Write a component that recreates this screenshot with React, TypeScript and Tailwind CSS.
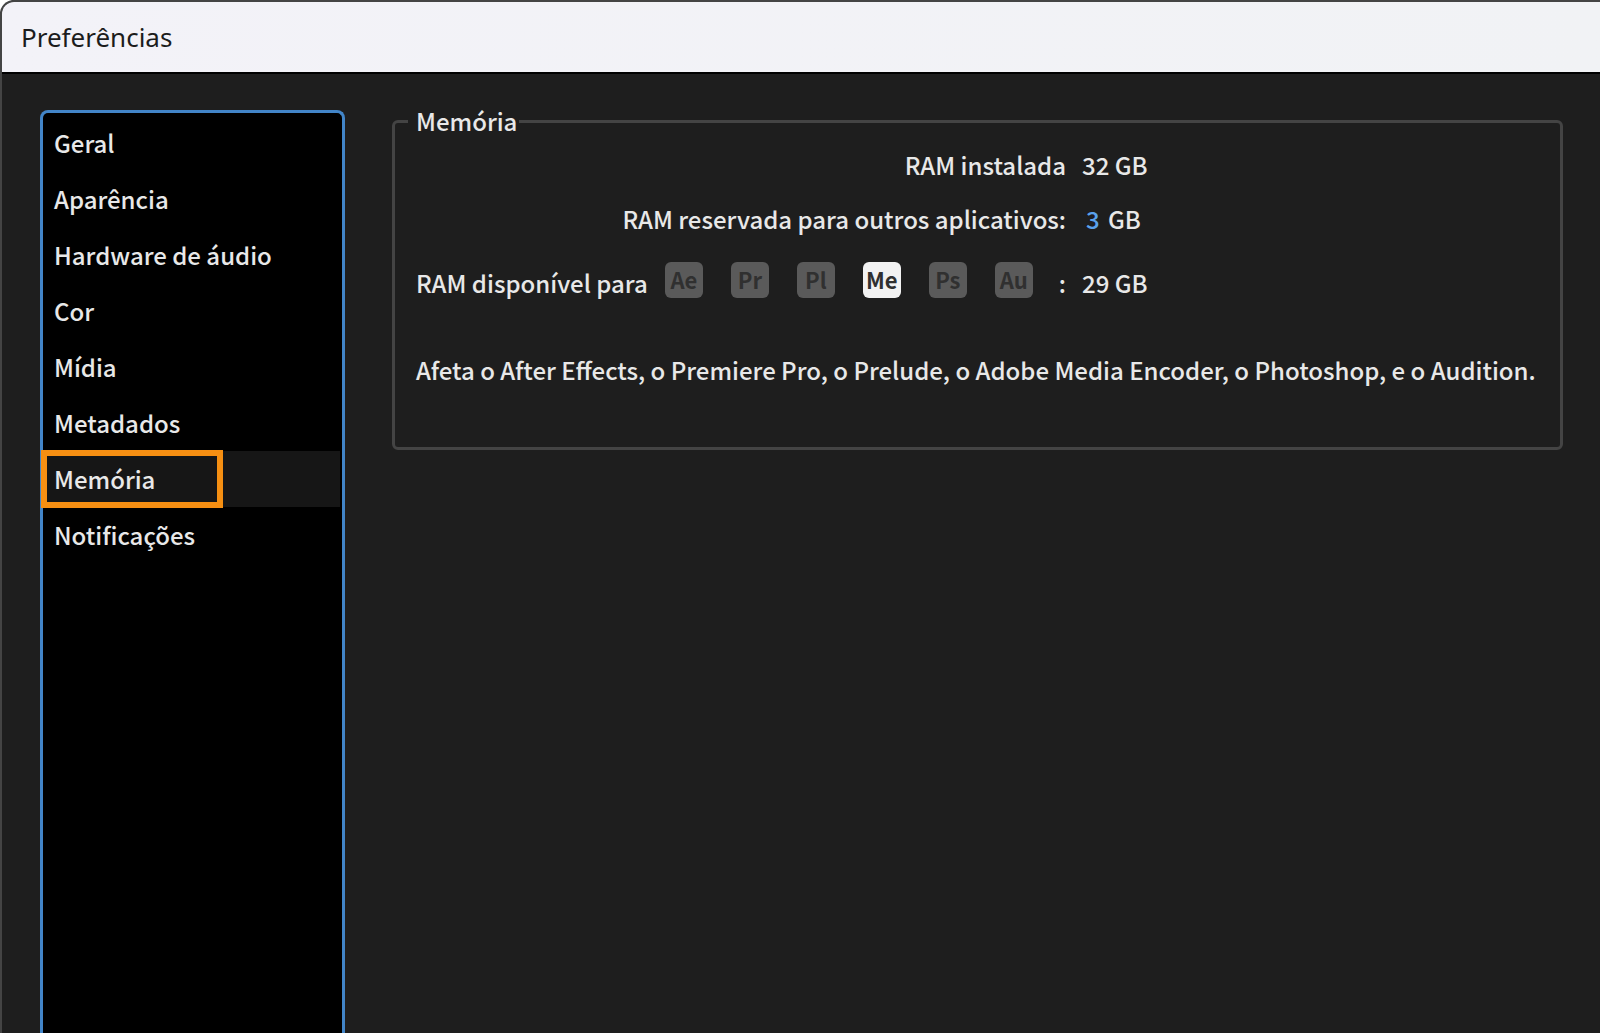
import { useState } from "react";

const sections = [
  "Geral",
  "Aparência",
  "Hardware de áudio",
  "Cor",
  "Mídia",
  "Metadados",
  "Memória",
  "Notificações",
];

const apps = ["Ae", "Pr", "Pl", "Me", "Ps", "Au"];

function Sidebar({ selected, onSelect }: { selected: string; onSelect: (name: string) => void }) {
  return (
    <nav
      aria-label="Categorias"
      className="flex w-[305px] shrink-0 flex-col rounded-t-lg border-3 border-b-0 border-[#4285c8] bg-black pt-0.5 pr-0.5"
    >
      {sections.map((name) => (
        <button
          key={name}
          type="button"
          onClick={() => onSelect(name)}
          className={`relative flex h-14 items-center pl-[11px] text-left ${name === selected ? "bg-[#161616]" : ""}`}
        >
          {name}
          {name === selected && (
            <span className="absolute -inset-y-px -left-0.5 w-[182px] border-6 border-[#f68f12]" />
          )}
        </button>
      ))}
    </nav>
  );
}

function AppChip({ name }: { name: string }) {
  const active = name === "Me";
  return (
    <li
      className={`flex h-9 w-[38px] items-center justify-center rounded-md pb-0.5 text-[22px] font-bold text-[#303030] ${
        active ? "bg-[#f2f2f2]" : "bg-[#5a5a5a]"
      }`}
    >
      {name}
    </li>
  );
}

function MemoryPanel() {
  const [reserved, setReserved] = useState("3");
  return (
    <fieldset className="min-w-0 flex-1 rounded-md border-3 border-[#444444] px-[21px] pb-[59px]">
      <legend className="-ml-2 pr-0.5 pl-2 leading-[22px]">Memória</legend>
      <div className="flex flex-col whitespace-nowrap">
        <div className="mt-1.5 flex h-[54px] items-center gap-4">
          <span className="w-[650px] text-right">RAM instalada</span>
          <span>32 GB</span>
        </div>
        <div className="flex h-[54px] items-center gap-4">
          <label htmlFor="reserved" className="w-[650px] text-right">
            RAM reservada para outros aplicativos:
          </label>
          <span className="flex gap-1.5 pl-1">
            <input
              id="reserved"
              type="text"
              value={reserved}
              onChange={(e) => setReserved(e.target.value)}
              className="w-4 bg-transparent text-[#5aa2ec] outline-none"
            />
            GB
          </span>
        </div>
        <div className="flex h-[74px] items-center gap-4">
          <div className="flex w-[650px] items-center">
            <span>RAM disponível para</span>
            <ul className="mr-[26px] mb-1.5 ml-auto flex gap-7">
              {apps.map((name) => (
                <AppChip key={name} name={name} />
              ))}
            </ul>
            <span>:</span>
          </div>
          <span>29 GB</span>
        </div>
      </div>
      <p className="mt-8">
        Afeta o After Effects, o Premiere Pro, o Prelude, o Adobe Media Encoder, o Photoshop, e o Audition.
      </p>
    </fieldset>
  );
}

export default function App() {
  const [selected, setSelected] = useState("Memória");
  return (
    <div className="bg-[linear-gradient(135deg,#ffffff_8px,#3a3a3a_9px)]">
      <main className="flex min-h-screen flex-col overflow-hidden rounded-tl-[14px] border-t-2 border-l-2 border-[#444444] bg-[#1e1e1e] font-['Noto_Sans_CJK_JP',sans-serif] text-[24px] leading-9 font-medium text-[#e8e8e8]">
        <header className="flex h-[72px] shrink-0 items-center border-b-2 border-black bg-linear-to-r from-[#f3f2f8] to-[#f1f2f5] pl-[19px]">
          <h1 className="font-['Noto_Sans',sans-serif] text-[26px] font-normal text-[#1c1c1c]">Preferências</h1>
        </header>
        <div className="flex flex-1 items-stretch gap-[47px] pt-9 pr-[37px] pl-[38px]">
          <Sidebar selected={selected} onSelect={setSelected} />
          <div className="flex min-w-0 flex-1 items-start">
            <MemoryPanel />
          </div>
        </div>
      </main>
    </div>
  );
}
